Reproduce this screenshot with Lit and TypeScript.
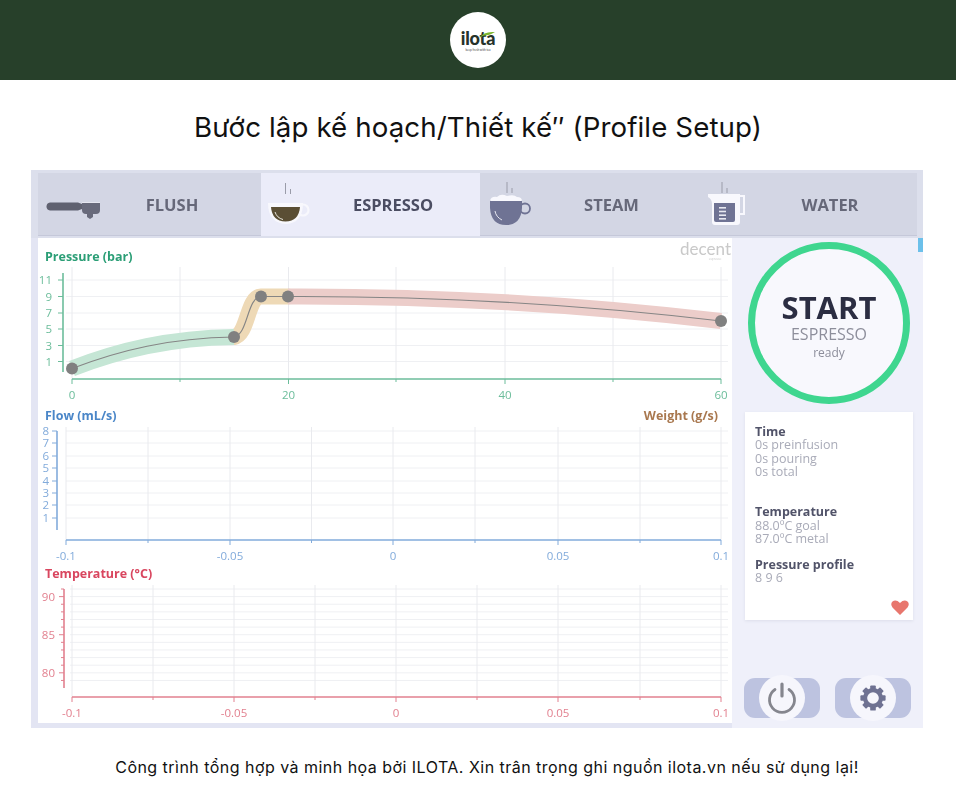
import { LitElement, html, css, svg } from "lit";
import { customElement, property } from "lit/decorators.js";

type Tick = { at: number; label?: string };

const range = (from: number, to: number, step: number) => {
  const out: number[] = [];
  for (let v = from; v <= to + 0.01; v += step) out.push(v);
  return out;
};

@customElement("plot-chart")
export class PlotChart extends LitElement {
  static styles = css`
    :host { display: block; }
    svg { display: block; width: 100%; height: 100%; font-family: "Open Sans", "Noto Sans", sans-serif; }
    .title { font-size: 12.5px; font-weight: 700; }
    .tick { font-size: 11.5px; }
    .grid { stroke: #eff0f3; stroke-width: 1; fill: none; }
    .vgrid { stroke: #e9eaee; stroke-width: 1; fill: none; }
  `;
  @property({ attribute: false }) cfg: any;
  render() {
    const c = this.cfg;
    return html`<svg viewBox="${c.x} ${c.y} ${c.w} ${c.h}" width=${c.w} height=${c.h}>
      ${c.hgrid.map((y: number) => svg`<line class="grid" x1=${c.gx1} x2=${c.gx2} y1=${y} y2=${y}></line>`)}
      ${c.vgrid.map((x: number) => svg`<line class="vgrid" x1=${x} x2=${x} y1=${c.gy1} y2=${c.axisY}></line>`)}
      <text class="title" x="45" y=${c.titleY} fill=${c.titleColor}>${c.title}</text>
      ${c.title2 ? svg`<text class="title" x="718" y=${c.titleY} text-anchor="end" fill="#a9784f">${c.title2}</text>` : ""}
      <path d="M${c.axisX} ${c.ay1}V${c.ay2}" stroke=${c.axisColor} stroke-width="1.6" fill="none"></path>
      ${c.yTicks.map((t: Tick) => svg`<line x1=${c.axisX - (t.label ? 5 : 3)} x2=${c.axisX} y1=${t.at} y2=${t.at} stroke=${c.axisColor} stroke-width="1"></line>
        ${t.label ? svg`<text class="tick" x=${c.axisX - c.labelGap} y=${t.at + 4} text-anchor="end" fill=${c.axisColor}>${t.label}</text>` : ""}`)}
      <path d="M${c.xTicks[0].at} ${c.axisY}H${c.xTicks[c.xTicks.length - 1].at}" stroke=${c.axisColor} stroke-width="1.4" fill="none"></path>
      ${c.xTicks.map((t: Tick) => svg`<line x1=${t.at} x2=${t.at} y1=${c.axisY} y2=${c.axisY + (t.label ? 5 : 3)} stroke=${c.axisColor} stroke-width="1"></line>
        ${t.label ? svg`<text class="tick" x=${t.at} y=${c.axisY + 20} text-anchor="middle" fill=${c.axisColor}>${t.label}</text>` : ""}`)}
      ${c.extra ?? ""}
    </svg>`;
  }
}

const pressureCurve = svg`
  <path d="M234 337C248 335 247 297 261 296.5H288" stroke="#eed9b6" stroke-width="16" fill="none" stroke-linecap="round"></path>
  <path d="M72 368.5C120 350 170 338 234 337" stroke="#c5e6d5" stroke-width="16" fill="none"></path>
  <path d="M288 296.5C420 296 560 302 721 321" stroke="#eccdca" stroke-width="16" fill="none"></path>
  <path d="M72 368.5C120 350 170 338 234 337C248 335 247 297 261 296.5H288C420 296 560 302 721 321" stroke="#858585" stroke-width="1.1" fill="none"></path>
  ${[[72, 368.5], [234, 337], [261, 296.5], [288, 296.5], [721, 321]].map(([x, y]) => svg`<circle cx=${x} cy=${y} r="6" fill="#808080"></circle>`)}
  <text x="731" y="255" text-anchor="end" font-size="17" fill="#c9c9c9" style="font-family:Lato,sans-serif;font-weight:400">decent</text>
  <text x="715" y="260" text-anchor="middle" font-size="3" fill="#c9c9c9">espresso</text>
`;

const charts = [
  {
    x: 38, y: 238, w: 694, h: 167,
    title: "Pressure (bar)", titleY: 261, titleColor: "#2b9e76", axisColor: "#6cbd9b", labelGap: 11,
    hgrid: [280, 296.5, 313, 329, 345.5, 361.5], vgrid: [72, 180, 288.5, 396, 505, 613, 721],
    gx1: 66, gx2: 728, gy1: 267, axisX: 63, ay1: 273, ay2: 372, axisY: 379,
    yTicks: [[280, "11"], [296.5, "9"], [313, "7"], [329, "5"], [345.5, "3"], [361.5, "1"]].map(([at, label]) => ({ at, label })),
    xTicks: [[72, "0"], [180], [288.5, "20"], [396], [505, "40"], [613], [721, "60"]].map(([at, label]) => ({ at, label })),
    extra: pressureCurve,
  },
  {
    x: 38, y: 405, w: 694, h: 158,
    title: "Flow (mL/s)", title2: "Weight (g/s)", titleY: 420, titleColor: "#4a86c8", axisColor: "#82abdb", labelGap: 8,
    hgrid: [431, 443, 456, 468, 481, 493, 505, 518], vgrid: [66, 148, 230, 311.5, 393, 475, 558, 640, 721],
    gx1: 66, gx2: 728, gy1: 427, axisX: 57, ay1: 431, ay2: 530, axisY: 540,
    yTicks: [[431, "8"], [443, "7"], [456, "6"], [468, "5"], [481, "4"], [493, "3"], [505, "2"], [518, "1"]].map(([at, label]) => ({ at, label })),
    xTicks: [[66, "-0.1"], [148], [230, "-0.05"], [311.5], [393, "0"], [475], [558, "0.05"], [640], [721, "0.1"]].map(([at, label]) => ({ at, label })),
  },
  {
    x: 38, y: 563, w: 694, h: 160,
    title: "Temperature (°C)", titleY: 578, titleColor: "#d9465f", axisColor: "#e2808f", labelGap: 9,
    hgrid: range(589, 688, 7.62), vgrid: [72, 153, 234, 315, 396, 477, 558, 640, 721],
    gx1: 70, gx2: 728, gy1: 585, axisX: 64, ay1: 589, ay2: 688, axisY: 697,
    yTicks: range(589, 688, 7.62).map((at, i) => ({
      at,
      label: i === 1 ? "90" : i === 6 ? "85" : i === 11 ? "80" : undefined,
    })),
    xTicks: [[72, "-0.1"], [153], [234, "-0.05"], [315], [396, "0"], [477], [558, "0.05"], [640], [721, "0.1"]].map(([at, label]) => ({ at, label })),
  },
];

const steam = (x: number) => svg`
  <path d="M${x} 9V20" stroke="#9a9ca9" stroke-width="1" fill="none"></path>
  <path d="M${x + 5} 15V20" stroke="#9a9ca9" stroke-width="1" fill="none"></path>`;

const icons = {
  flush: svg`
    <path d="M12 29.5H40L44 31V36L40 37.5H12Q8.5 37 8.5 33.5Q8.5 30 12 29.5Z" fill="#5f6170"></path>
    <path d="M44 29H62V37Q62 41 58 41H48Q44 41 44 37Z" fill="#686a7b"></path>
    <path d="M44 29.5H62" stroke="#e6e7f0" stroke-width="1"></path>
    <path d="M49 41H55V44L52 46L49 44Z" fill="#686a7b"></path>`,
  espresso: svg`
    ${steam(24.5)}
    <circle cx="42" cy="36" r="5.5" fill="none" stroke="#f8f8fd" stroke-width="2.2"></circle>
    <path d="M7 29H42Q42 49 25 50Q7 49 7 29Z" fill="#f8f8fd"></path>
    <path d="M10 33H39Q38 47 24.5 47.5Q11 47 10 33Z" fill="#5a4e34"></path>
    <path d="M14 38Q16 44 22 45.5" stroke="#e8e6dc" stroke-width="1" fill="none"></path>`,
  steam: svg`
    ${steam(27)}
    <circle cx="45" cy="35.5" r="5" fill="none" stroke="#6f7394" stroke-width="1.8"></circle>
    <path d="M10 27H42V35Q41 52 26 52Q11 52 10 35Z" fill="#6f7394"></path>
    <path d="M10 28Q11 23 17 24Q21 20 27 23Q34 21 37 24Q42 24 42 28Z" fill="#f8f8fd"></path>
    <path d="M15 38Q16 44 22 47" stroke="#e8e9f2" stroke-width="1" fill="none"></path>`,
  water: svg`
    ${steam(28)}
    <path d="M40 23H50V41H44" fill="none" stroke="#f8f8fd" stroke-width="2"></path>
    <path d="M14 21H46V49Q46 52 43 52H21Q18 52 18 49V31Q18 26 14 24Z" fill="#f8f8fd"></path>
    <path d="M20 30H41V47Q41 49 39 49H22Q20 49 20 47Z" fill="#6f7394"></path>
    ${[34, 37.7, 41.4, 45].map((y) => svg`<rect x="25" y=${y} width="7" height="1.6" fill="#e8e9f2"></rect>`)}`,
};

@customElement("app-root")
export class AppRoot extends LitElement {
  static styles = css`
    :host { display: block; width: 956px; height: 800px; background: #fff; overflow: hidden; font-family: "Inter", "Noto Sans", sans-serif; }
    .top { height: 80px; background: #27402a; display: flex; align-items: center; justify-content: center; }
    .logo { width: 56px; height: 56px; border-radius: 50%; background: #fff; display: flex; flex-direction: column; align-items: center; justify-content: center; position: relative; }
    .logo-name { font-family: "Lato", sans-serif; font-weight: 900; font-size: 18px; line-height: 15px; letter-spacing: -0.2px; color: #26322a; margin-top: 3px; }
    .logo-sub { font-family: "Lato", sans-serif; font-size: 3px; line-height: 4px; color: #444; margin-top: 2px; }
    .leaf { position: absolute; left: 28px; top: 19px; }
    h1 { margin: 0; height: 90px; display: flex; align-items: center; justify-content: center; font-size: 27.7px; font-weight: 400; color: #111; letter-spacing: 0.1px; padding-top: 3px; box-sizing: border-box; }
    .app { margin: 0 33px 0 31px; width: 892px; height: 558px; background: #e3e5f3; display: flex; flex-direction: column; filter: blur(0.35px); font-family: "Open Sans", "Noto Sans", sans-serif; }
    .tabs { display: grid; grid-template-columns: 223px 219px 214px 223px; padding: 3px 6px 2px 7px; height: 68px; box-sizing: border-box; background: #dcdfec; flex: none; }
    .tab { display: grid; grid-template-columns: 45px 1fr; align-items: center; background: #d3d6e4; border-bottom: 1px solid #c5c8d9; box-sizing: border-box; }
    .tab.wide { grid-template-columns: 49px 1fr; }
    .tab.on { background: #ebecf9; border-bottom: none; }
    .tab svg { display: block; overflow: visible; width: 70px; height: 62px; }
    .tab span { font-size: 16.5px; font-weight: 700; color: #666879; text-align: center; }
    .tab.on span { color: #4b4d62; }
    .main { flex: 1; display: flex; min-height: 0; }
    .plots { width: 694px; margin-left: 7px; margin-bottom: 5px; background: #fff; display: flex; flex-direction: column; }
    .side { flex: 1; background: #eff0fa; position: relative; display: flex; flex-direction: column; align-items: flex-start; padding: 4px 0 0 13px; box-sizing: border-box; }
    .scroll { position: absolute; right: 0; top: 0; width: 5px; height: 14px; background: #6cc0ea; }
    .start { width: 162px; height: 162px; box-sizing: border-box; border: 7px solid #3fd68f; border-radius: 50%; background: #f8f8fd; margin: 0 0 8px 3px; display: flex; flex-direction: column; align-items: center; justify-content: center; padding-top: 5px; }
    .start b { font-size: 31px; line-height: 33px; font-weight: 700; color: #2b2d42; }
    .start i { font-style: normal; font-size: 16px; line-height: 21px; color: #8d8e9b; }
    .start small { font-size: 12px; line-height: 16px; color: #8d8e9b; }
    .card { width: 168px; height: 208px; background: #fff; box-sizing: border-box; padding: 13px 10px; box-shadow: 0 1px 3px #dcdeea; position: relative; font-size: 12.5px; line-height: 13.4px; color: #a9abb8; }
    .card p { margin: 0; }
    .card strong { display: block; color: #515369; font-weight: 700; }
    .card .g2 { margin-top: 26.5px; }
    .card .g3 { margin-top: 12.5px; }
    .heart { position: absolute; right: 4px; bottom: 5px; display: block; }
    .btns { display: flex; gap: 15px; margin-top: 58px; margin-left: -1px; }
    .btn { width: 76px; height: 40px; background: #bdc3e0; border-radius: 11px; display: flex; align-items: center; justify-content: center; }
    .btn div { width: 46px; height: 46px; flex: none; border-radius: 50%; background: #f6f6fc; display: flex; align-items: center; justify-content: center; }
    footer { height: 72px; display: flex; align-items: center; justify-content: center; font-size: 16px; font-weight: 400; letter-spacing: 0.47px; color: #111; padding: 6px 0 0 18px; box-sizing: border-box; }
  `;

  private tab(name: string, icon: unknown, cls = "") {
    return html`<div class="tab ${cls}">
      <svg viewBox="0 0 70 62">${icon}</svg><span>${name}</span>
    </div>`;
  }

  render() {
    return html`
      <div class="top">
        <div class="logo">
          <svg class="leaf" width="18" height="8" viewBox="0 0 18 8"><path d="M1 7Q6 0 17 1Q12 4 10 4Q5 4 1 7Z" fill="#7cb72e"></path></svg>
          <div class="logo-name">ilota</div>
          <div class="logo-sub">keep fresh with tea</div>
        </div>
      </div>
      <h1>Bước lập kế hoạch/Thiết kế″ (Profile Setup)</h1>
      <div class="app">
        <div class="tabs">
          ${this.tab("FLUSH", icons.flush)}
          ${this.tab("ESPRESSO", icons.espresso, "on")}
          ${this.tab("STEAM", icons.steam, "wide")}
          ${this.tab("WATER", icons.water, "wide")}
        </div>
        <div class="main">
          <div class="plots">
            ${charts.map((c) => html`<plot-chart .cfg=${c}></plot-chart>`)}
          </div>
          <div class="side">
            <div class="scroll"></div>
            <div class="start"><b>START</b><i>ESPRESSO</i><small>ready</small></div>
            <div class="card">
              <p><strong>Time</strong>0s preinfusion<br />0s pouring<br />0s total</p>
              <p class="g2"><strong>Temperature</strong>88.0ºC goal<br />87.0ºC metal</p>
              <p class="g3"><strong>Pressure profile</strong>8 9 6</p>
              <svg class="heart" width="18" height="15" viewBox="0 0 18 15"><path d="M9 15L1.5 7.5Q-1 4 1.5 1.5Q5 -1 9 3Q13 -1 16.5 1.5Q19 4 16.5 7.5Z" fill="#e8766d"></path></svg>
            </div>
            <div class="btns">
              <div class="btn"><div>
                <svg width="32" height="32" viewBox="0 0 32 32"><path d="M9 7.5A12.5 12.5 0 1 0 23 7.5" fill="none" stroke="#85868e" stroke-width="2.8" stroke-linecap="round"></path><path d="M16 2V14" stroke="#85868e" stroke-width="3.2" stroke-linecap="round"></path></svg>
              </div></div>
              <div class="btn"><div>
                <svg width="28" height="28" viewBox="0 0 30 30">
                  ${[0, 45, 90, 135, 180, 225, 270, 315].map((a) => svg`<rect x="12" y="1.5" width="6" height="6" rx="1" fill="#6f7292" transform="rotate(${a} 15 15)"></rect>`)}
                  <circle cx="15" cy="15" r="8.5" fill="none" stroke="#6f7292" stroke-width="4.5"></circle>
                </svg>
              </div></div>
            </div>
          </div>
        </div>
      </div>
      <footer>Công trình tổng hợp và minh họa bởi ILOTA. Xin trân trọng ghi nguồn ilota.vn nếu sử dụng lại!</footer>
    `;
  }
}
